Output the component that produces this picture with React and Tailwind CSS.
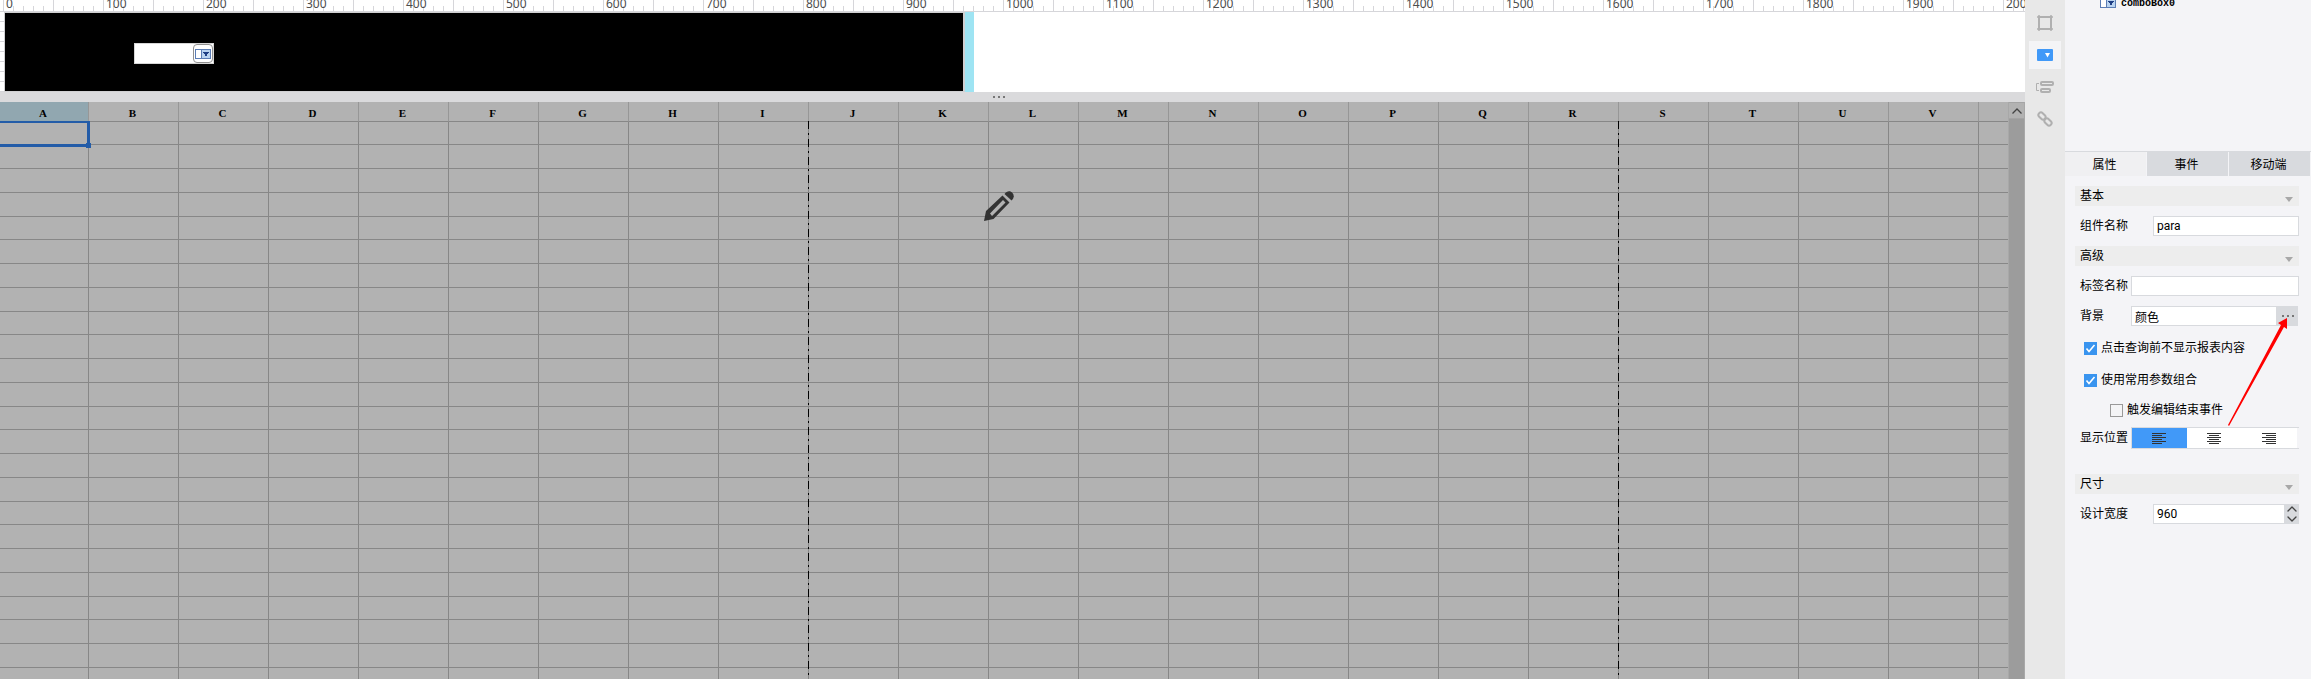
import React, { useState } from 'react';
import { ChevronUp, ChevronDown } from 'lucide-react';

const columns = 'ABCDEFGHIJKLMNOPQRSTUV'.split('');
const rows = Array.from({ length: 24 }, (_, i) => i);
const hundreds = Array.from({ length: 21 }, (_, i) => i * 100);

// x position of the page break lines in the sheet
const pageBreaks = [808, 1618];

const alignments = [
  { id: 'left', label: '左对齐', d: 'M0 .5h14M0 2.5h10M0 4.5h14M0 6.5h10M0 8.5h14M0 10.5h10' },
  { id: 'center', label: '居中', d: 'M0 .5h14M2 2.5h10M0 4.5h14M2 6.5h10M0 8.5h14M2 10.5h10' },
  { id: 'right', label: '右对齐', d: 'M0 .5h14M4 2.5h10M0 4.5h14M4 6.5h10M0 8.5h14M4 10.5h10' },
];

function ComboIcon() {
  return (
    <svg width="16" height="10" viewBox="0 0 16 10" className="shrink-0" aria-hidden="true">
      <rect x=".5" y=".5" width="15" height="9" fill="#fff" stroke="#5b7db5" />
      <rect x="6.5" y=".5" width="9" height="9" fill="#b9d3f0" stroke="#5b7db5" />
      <path d="M8 3h6v1h-1v1h-1v2h-2v-2h-1v-1h-1z" fill="#1f3f85" />
    </svg>
  );
}

function Ruler() {
  return (
    <div className="flex h-3 shrink-0 overflow-hidden border-b border-[#d6d6da] bg-white pl-[3px]">
      {hundreds.map((n) => (
        <div key={n} className="relative flex w-[100px] shrink-0 items-end">
          {Array.from({ length: 10 }, (_, i) => (
            <span
              key={i}
              className={
                'w-2.5 border-l border-[#d6d6da] ' + (i % 5 === 0 ? 'h-full' : 'h-[5px]')
              }
            />
          ))}
          <span className="absolute bottom-0 left-[3px] text-xs leading-[14px] text-[#4d4d4d]">{n}</span>
        </div>
      ))}
    </div>
  );
}

function ParamPane() {
  return (
    <div className="flex h-20 shrink-0 bg-white">
      <div className="flex w-1 flex-col">
        {Array.from({ length: 8 }, (_, i) => (
          <span key={i} className="h-2.5 border-b border-[#d6d6da]" />
        ))}
      </div>
      <div className="w-[961px] border border-r-2 border-[#d0d0d2] bg-black pl-[129px] pt-[30px]">
        <div className="flex h-[21px] w-20 border border-[#d6d6d6] bg-white">
          <input aria-label="comboBox0" className="min-w-0 flex-1 bg-white outline-none" />
          <button
            aria-label="展开"
            className="flex w-5 items-center justify-center rounded-sm border border-[#909090] bg-white"
          >
            <ComboIcon />
          </button>
        </div>
      </div>
      <div className="w-[9px] bg-[#9ee4f3]" />
    </div>
  );
}

function Sheet() {
  return (
    <div className="flex min-h-0 flex-1 bg-[#b2b2b2]">
      <div className="relative min-w-0 flex-1 overflow-hidden">
        <table className="w-full table-fixed border-separate border-spacing-0">
          <thead>
            <tr className="h-5">
              {columns.map((c, i) => (
                <th
                  key={c}
                  className={
                    'border-b border-r border-b-[#878787] border-r-[#979797] p-0 pt-[3px] pr-0.5 font-["Liberation_Serif",serif] text-[11px] leading-4 font-bold text-black ' +
                    (i === 0 ? 'w-[89px] bg-[#91a7b0]' : 'w-[90px]')
                  }
                >
                  {c}
                </th>
              ))}
              <th className="border-b border-[#878787] p-0" />
            </tr>
          </thead>
          <tbody>
            {rows.map((r) => (
              <tr key={r} className={r % 4 === 0 ? 'h-[23px]' : 'h-6'}>
                {columns.map((c) => (
                  <td key={c} className="relative border-b border-r border-[#878787] p-0">
                    {/* selected cell */}
                    {r === 0 && c === 'A' && (
                      <div className="absolute -top-px -right-0.5 -bottom-[3px] left-0 z-10 border-t-2 border-r-[3px] border-b-[3px] border-[#235ca8]">
                        <span className="absolute -right-1 -bottom-1 h-[5px] w-[5px] bg-[#235ca8]" />
                      </div>
                    )}
                  </td>
                ))}
                <td className="border-b border-[#878787] p-0" />
              </tr>
            ))}
          </tbody>
        </table>

        {pageBreaks.map((x) => (
          <div
            key={x}
            style={{ left: x }}
            className="absolute top-[19px] bottom-0 w-px bg-[repeating-linear-gradient(180deg,#000_0_8px,#878787_8px_12px,#000_12px_14px,#878787_14px_18px)]"
          />
        ))}

        <svg
          className="absolute top-[89px] left-[984px]"
          width="30"
          height="30"
          viewBox="0 0 30 30"
          aria-hidden="true"
        >
          <path
            fillRule="evenodd"
            fill="#333"
            d="M0 30L2 20L18.5 4.5L25.5 11.5L9.5 28ZM6 22.5L8 25L21.5 11.5L19 9Z"
          />
          <path fill="#333" d="M20.5 3C23 -.5 26.500 -.5 28.500 2C30.500 4.500 30 7 27.500 9.500Z" />
        </svg>
      </div>

      <div className="flex w-[17px] shrink-0 flex-col border-x border-[#a8a8a8] bg-[#9c9c9c]">
        <button
          aria-label="向上滚动"
          className="flex h-[17px] items-center justify-center border-y border-[#a4a4a4] bg-[#b2b2b2]"
        >
          <svg width="10" height="6" viewBox="0 0 10 6" fill="none" stroke="#444" strokeWidth="1.3">
            <path d="M.5 5.500L5 1L9.500 5.500" />
          </svg>
        </button>
      </div>
    </div>
  );
}

function ToolRail() {
  return (
    <nav className="flex w-10 shrink-0 flex-col items-center gap-1 bg-[#e8e8e8] pt-[9px]">
      <button aria-label="布局" className="flex h-7 w-8 items-center justify-center">
        <svg width="16" height="16" viewBox="0 0 16 16" fill="none" stroke="#b0b0b0">
          <rect x="2" y="2" width="12" height="12" strokeWidth="2" />
          <path d="M0 2h3M2 0v3M13 2h3M14 0v3M0 14h3M2 13v3M13 14h3M14 13v3" strokeWidth="1.5" />
        </svg>
      </button>
      <button aria-label="控件" className="flex h-7 w-8 items-center justify-center bg-[#f4f4f6]">
        <svg width="16" height="12" viewBox="0 0 16 12">
          <rect width="16" height="12" rx="1" fill="#4199f8" />
          <path d="M8 4h5L10.500 8.500z" fill="#fff" />
        </svg>
      </button>
      <button aria-label="结构" className="flex h-7 w-8 items-center justify-center">
        <svg width="18" height="12" viewBox="0 0 18 12" fill="none" stroke="#b0b0b0">
          <path d="M3 2.500H.5v7H3" />
          <rect x="5" y="1" width="12" height="3" rx="1" strokeWidth="2" />
          <rect x="5" y="8" width="9" height="3" rx="1" strokeWidth="2" />
        </svg>
      </button>
      <button aria-label="链接" className="flex h-7 w-8 items-center justify-center">
        <svg width="16" height="16" viewBox="0 0 16 16" fill="none" stroke="#b0b0b0" strokeWidth="2">
          <rect x="-4" y="-2.5" width="8" height="5" rx="2.5" transform="translate(5 5) rotate(45)" />
          <rect x="-4" y="-2.5" width="8" height="5" rx="2.5" transform="translate(11 11) rotate(45)" />
        </svg>
      </button>
    </nav>
  );
}

function SectionHeader({ title }) {
  return (
    <button className="flex h-5 items-center justify-between bg-[#ededed] pr-1.5 pl-[5px]">
      <span>{title}</span>
      <span className="mt-1.5 border-x-4 border-t-[5px] border-x-transparent border-t-[#a8a8a8]" />
    </button>
  );
}

function Field({ id, label, wide, children }) {
  return (
    <div className="flex h-5 items-center pl-[5px]">
      <label htmlFor={id} className={'shrink-0 ' + (wide ? 'w-[51px]' : 'w-[73px]')}>
        {label}
      </label>
      {children}
    </div>
  );
}

function CheckRow({ label, defaultChecked }) {
  return (
    <label className="flex h-5 items-center gap-1">
      <span className="grid place-items-center">
        <input
          type="checkbox"
          defaultChecked={defaultChecked}
          className="peer col-start-1 row-start-1 h-[13px] w-[13px] appearance-none border border-[#999] bg-[#f4f4f6] checked:border-[#3994ef] checked:bg-[#3994ef]"
        />
        <svg
          className="pointer-events-none invisible col-start-1 row-start-1 peer-checked:visible"
          width="11"
          height="11"
          viewBox="0 0 11 11"
          fill="none"
          stroke="#fff"
          strokeWidth="1.6"
        >
          <path d="M1.500 5.500L4 8.500L9.500 2" />
        </svg>
      </span>
      {label}
    </label>
  );
}

const inputClass =
  "h-5 min-w-0 flex-1 border border-[#d8dade] bg-white px-[3px] font-['Roboto','Noto_Sans_CJK_SC',sans-serif] text-xs outline-none";

function PropertyPanel() {
  const [tab, setTab] = useState('属性');
  const [align, setAlign] = useState('left');

  return (
    <aside className="relative flex w-[246px] shrink-0 flex-col bg-[#f4f4f7]">
      <div className="h-[151px] overflow-hidden">
        <div className="-mt-1 flex h-3.5 items-center gap-[5px] pl-[35px] font-['Liberation_Mono',monospace] text-[10px] leading-3 font-bold">
          <ComboIcon />
          <span className="pt-0.5">comboBox0</span>
        </div>
      </div>

      <div role="tablist" className="flex h-[25px] gap-px border-t border-[#d8dade] pr-px">
        {['属性', '事件', '移动端'].map((t) => (
          <button
            key={t}
            role="tab"
            aria-selected={tab === t}
            onClick={() => setTab(t)}
            className={'flex-1 pt-px pr-0.5 ' + (tab === t ? 'bg-[#f0f0f2]' : 'bg-[#d8dade]')}
          >
            {t}
          </button>
        ))}
      </div>

      <div className="flex flex-col gap-2.5 pt-2.5 pr-3 pl-2.5">
        <SectionHeader title="基本" />
        <Field id="name" label="组件名称">
          <input id="name" defaultValue="para" className={inputClass} />
        </Field>
        <SectionHeader title="高级" />
        <Field id="tag" label="标签名称" wide>
          <input id="tag" className={inputClass} />
        </Field>
        <Field id="bg" label="背景" wide>
          <input id="bg" defaultValue="颜色" className={inputClass} />
          <button
            aria-label="选择背景"
            className="mr-px flex h-5 w-[21px] items-center justify-center gap-[3px] bg-[#d8dade]"
          >
            <span className="h-0.5 w-0.5 bg-[#777]" />
            <span className="h-0.5 w-0.5 bg-[#777]" />
            <span className="h-0.5 w-0.5 bg-[#777]" />
          </button>
        </Field>
      </div>

      <div className="flex flex-col pt-3 pr-3 pl-[19px]">
        <CheckRow label="点击查询前不显示报表内容" defaultChecked />
        <div className="pt-3">
          <CheckRow label="使用常用参数组合" defaultChecked />
        </div>
        <div className="pt-2.5 pl-[26px]">
          <CheckRow label="触发编辑结束事件" />
        </div>
      </div>

      <div className="mt-[7px] flex h-[22px] items-center pr-3 pl-[15px]">
        <span id="align-label" className="w-[51px] shrink-0">显示位置</span>
        <div
          role="group"
          aria-labelledby="align-label"
          className="flex h-[22px] flex-1 border-y border-l border-[#d8dade] pr-0.5"
        >
          {alignments.map((a) => (
            <button
              key={a.id}
              aria-label={a.label}
              onClick={() => setAlign(a.id)}
              className={
                'flex flex-1 items-center justify-center pr-0.5 ' +
                (align === a.id ? 'bg-[#4199f8]' : 'bg-white')
              }
            >
              <svg width="14" height="11" viewBox="0 0 14 11" stroke="#333">
                <path d={a.d} />
              </svg>
            </button>
          ))}
        </div>
      </div>

      <div className="flex flex-col gap-2.5 pt-[25px] pr-3 pl-2.5">
        <SectionHeader title="尺寸" />
        <Field id="width" label="设计宽度">
          <input id="width" defaultValue="960" className={inputClass} />
          <div className="flex h-5 w-3.5 flex-col bg-[#d8dade]">
            <button aria-label="增加" className="flex h-2.5 items-center justify-center">
              <ChevronUp size={16} strokeWidth={2} color="#444" className="shrink-0" />
            </button>
            <button aria-label="减少" className="flex h-2.5 items-center justify-center">
              <ChevronDown size={16} strokeWidth={2} color="#444" className="shrink-0" />
            </button>
          </div>
        </Field>
      </div>

      {/* arrow pointing at the background button */}
      <svg
        className="pointer-events-none absolute top-[317px] left-[162px]"
        width="62"
        height="110"
        viewBox="0 0 62 110"
        aria-hidden="true"
      >
        <path d="M1 108L54 8L51 6L60 1L60 12L57 10L2 109Z" fill="#f00" />
      </svg>
    </aside>
  );
}

export default function App() {
  return (
    <div className="flex h-screen overflow-hidden bg-[#f4f4f7] font-['Noto_Sans','Noto_Sans_CJK_SC',sans-serif] text-xs text-black">
      <main className="flex min-w-0 flex-1 flex-col">
        <Ruler />
        <ParamPane />
        <div className="flex h-2.5 shrink-0 items-center justify-center gap-[3px] bg-[#dadadc] pr-7">
          <span className="h-0.5 w-0.5 bg-[#777]" />
          <span className="h-0.5 w-0.5 bg-[#777]" />
          <span className="h-0.5 w-0.5 bg-[#777]" />
        </div>
        <Sheet />
      </main>
      <ToolRail />
      <PropertyPanel />
    </div>
  );
}
